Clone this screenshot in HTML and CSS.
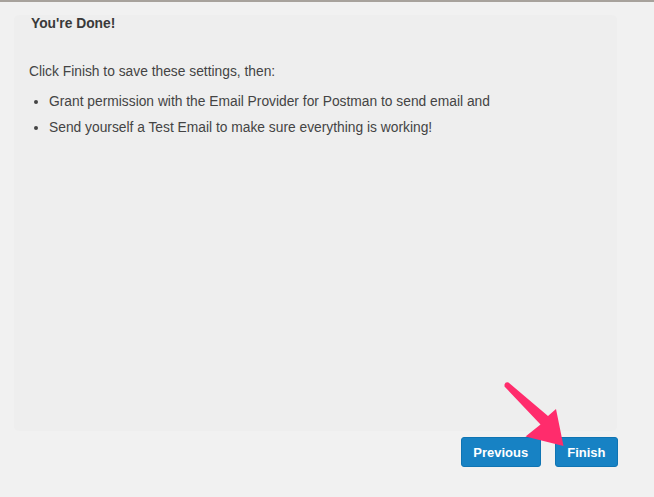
FILE: index.html
```html
<!DOCTYPE html>
<html>
<head>
<meta charset="utf-8">
<link rel="stylesheet" href="styles.css">
</head>
<body>
<div class="page">
  <section class="panel">
    <h2 class="title">You're Done!</h2>
    <p class="intro">Click Finish to save these settings, then:</p>
    <ul class="steps">
      <li>Grant permission with the Email Provider for Postman to send email and</li>
      <li>Send yourself a Test Email to make sure everything is working!</li>
    </ul>
  </section>
  <div class="actions">
    <button class="btn">Previous</button>
    <button class="btn">Finish</button>
  </div>
  <svg class="arrow" width="654" height="497" viewBox="0 0 654 497">
    <path d="M504.5 371.5 Q505.5 368.5 508.5 369.5 L548 403 L556 396 L563.5 433 L525.5 423.5 L540.5 411.5 L504.5 373.5 Z" fill="#ff2c6c"/>
  </svg>
</div>
</body>
</html>
```
FILE: styles.css
```css
html, body {
  margin: 0;
  padding: 0;
}
body {
  background: #f1f1f1;
  border-top: 2px solid #a7a29c;
  font-family: "Liberation Sans", Arial, sans-serif;
  color: #444;
  width: 654px;
  height: 495px;
  overflow: hidden;
}
.page {
  position: relative;
  height: 495px;
}
.panel {
  margin: 13px 37px 0 14px;
  height: 416px;
  box-sizing: border-box;
  padding: 0 15px;
  background: #eeeeee;
  border-radius: 5px;
}
.title {
  margin: 0;
  padding: 0 0 0 2px;
  font-size: 13.8px;
  font-weight: bold;
  line-height: 18px;
  color: #3a3a3a;
}
.intro {
  margin: 30px 0 0;
  font-size: 13.8px;
  line-height: 18px;
}
.steps {
  margin: 12px 0 0;
  padding-left: 20px;
  font-size: 13.8px;
  line-height: 18px;
}
.steps li {
  margin-bottom: 8px;
}
.actions {
  display: flex;
  justify-content: flex-end;
  gap: 14px;
  margin: 6px 36px 0 0;
}
.btn {
  height: 30px;
  padding: 0 11.5px;
  background: #1782c4;
  border: 1px solid #0f74b3;
  border-radius: 3px;
  color: #fff;
  font-family: "Liberation Sans", Arial, sans-serif;
  font-size: 13px;
  font-weight: bold;
}
.arrow {
  position: absolute;
  left: 0;
  top: -2px;
  pointer-events: none;
}
```
